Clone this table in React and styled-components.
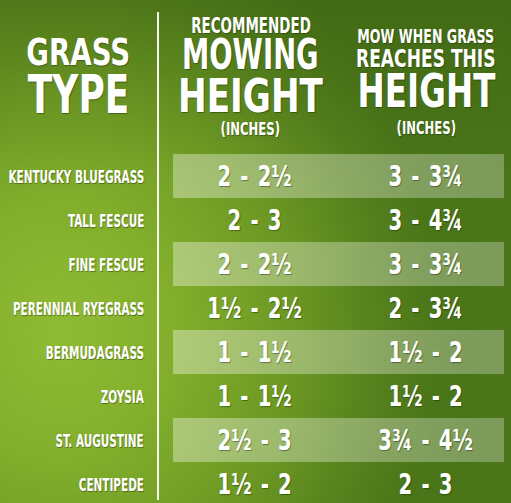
import React from 'react';
import styled, { createGlobalStyle } from 'styled-components';

const GlobalStyle = createGlobalStyle`
  html, body {
    margin: 0;
    padding: 0;
    overflow: hidden;
    background: #5e8a20;
  }
`;

const Board = styled.div`
  width: 511px;
  height: 503px;
  overflow: hidden;
  display: grid;
  grid-template-columns: 157px 2px 14px 331px 7px;
  grid-template-rows: 154px repeat(8, 44px);
  font-family: "DejaVu Sans Condensed", "Liberation Sans Narrow", "Liberation Sans", sans-serif;
  font-weight: 700;
  color: #fff;
  text-shadow: 1px 1px 1px rgba(20, 40, 0, 0.45);
  background:
    linear-gradient(180deg, rgba(40, 70, 10, 0.22) 0%, rgba(40, 70, 10, 0) 35%),
    radial-gradient(ellipse 75% 85% at 12% 66%, #8fbb34 0%, #82ae2c 30%, #6c9823 60%, #547f1c 85%, #4a7518 100%);
`;

const Divider = styled.div`
  grid-column: 2;
  grid-row: 1 / -1;
  background: #f4f8ea;
  margin: 12px 0 6px;
`;

const Squeeze = styled.span`
  display: inline-block;
  white-space: nowrap;
  transform: scaleX(${p => p.$x || 1});
  transform-origin: ${p => p.$origin || 'center'};
`;

const TypeHead = styled.div`
  grid-column: 1;
  grid-row: 1;
  padding-top: 33px;
`;

const HeadLine = styled.div`
  display: flex;
  justify-content: center;
  font-size: ${p => p.$size}px;
  line-height: ${p => p.$lh}px;
  white-space: nowrap;
`;

const ColumnHeads = styled.div`
  grid-column: 4;
  grid-row: 1;
  display: grid;
  grid-template-columns: 164px 1fr;
`;

const HeadCell = styled.div`
  min-width: 0;
  padding-top: ${p => p.$top}px;
  padding-left: ${p => p.$shift || 0}px;
  padding-right: ${p => p.$trim || 0}px;
`;

const Label = styled.div`
  grid-column: 1;
  display: flex;
  align-items: center;
  justify-content: flex-end;
  padding-right: 13px;
  font-size: 18px;
`;

const Band = styled.div`
  grid-column: 4;
  display: grid;
  grid-template-columns: 164px 1fr;
  align-items: center;
  font-size: 28px;
  background: ${p => p.$lit
    ? 'linear-gradient(90deg, rgba(255,255,255,0.36), rgba(255,255,255,0.28))'
    : 'transparent'};
`;

const Value = styled.div`
  display: flex;
  justify-content: center;
  min-width: 0;
  padding-left: ${p => p.$shift || 0}px;
  word-spacing: 3px;
`;

const rows = [
  ['KENTUCKY BLUEGRASS', '2 - 2½', '3 - 3¾'],
  ['TALL FESCUE', '2 - 3', '3 - 4¾'],
  ['FINE FESCUE', '2 - 2½', '3 - 3¾'],
  ['PERENNIAL RYEGRASS', '1½ - 2½', '2 - 3¾'],
  ['BERMUDAGRASS', '1 - 1½', '1½ - 2'],
  ['ZOYSIA', '1 - 1½', '1½ - 2'],
  ['ST. AUGUSTINE', '2½ - 3', '3¾ - 4½'],
  ['CENTIPEDE', '1½ - 2', '2 - 3'],
];

export default function App() {
  return (
    <>
      <GlobalStyle />
      <Board>
        <TypeHead>
          <HeadLine $size={38} $lh={38}><Squeeze $x={0.81}>GRASS</Squeeze></HeadLine>
          <HeadLine $size={54} $lh={47}><Squeeze $x={0.74}>TYPE</Squeeze></HeadLine>
        </TypeHead>
        <Divider />
        <ColumnHeads>
          <HeadCell $top={15} $trim={9}>
            <HeadLine $size={22} $lh={22}><Squeeze $x={0.68}>RECOMMENDED</Squeeze></HeadLine>
            <HeadLine $size={43} $lh={35}><Squeeze $x={0.71}>MOWING</Squeeze></HeadLine>
            <HeadLine $size={47} $lh={47}><Squeeze $x={0.81}>HEIGHT</Squeeze></HeadLine>
            <HeadLine $size={18} $lh={20}><Squeeze $x={0.72}>(INCHES)</Squeeze></HeadLine>
          </HeadCell>
          <HeadCell $top={26} $shift={11}>
            <HeadLine $size={20} $lh={20}><Squeeze $x={0.7}>MOW WHEN GRASS</Squeeze></HeadLine>
            <HeadLine $size={25} $lh={25}><Squeeze $x={0.76}>REACHES THIS</Squeeze></HeadLine>
            <HeadLine $size={47} $lh={39}><Squeeze $x={0.77}>HEIGHT</Squeeze></HeadLine>
            <HeadLine $size={18} $lh={36}><Squeeze $x={0.72}>(INCHES)</Squeeze></HeadLine>
          </HeadCell>
        </ColumnHeads>
        {rows.map(([name, mow, reach], i) => (
          <React.Fragment key={name}>
            <Label style={{ gridRow: i + 2 }}>
              <Squeeze $x={0.646} $origin="right">{name}</Squeeze>
            </Label>
            <Band $lit={i % 2 === 0} style={{ gridRow: i + 2 }}>
              <Value><Squeeze $x={0.78}>{mow}</Squeeze></Value>
              <Value $shift={11}><Squeeze $x={0.78}>{reach}</Squeeze></Value>
            </Band>
          </React.Fragment>
        ))}
      </Board>
    </>
  );
}
